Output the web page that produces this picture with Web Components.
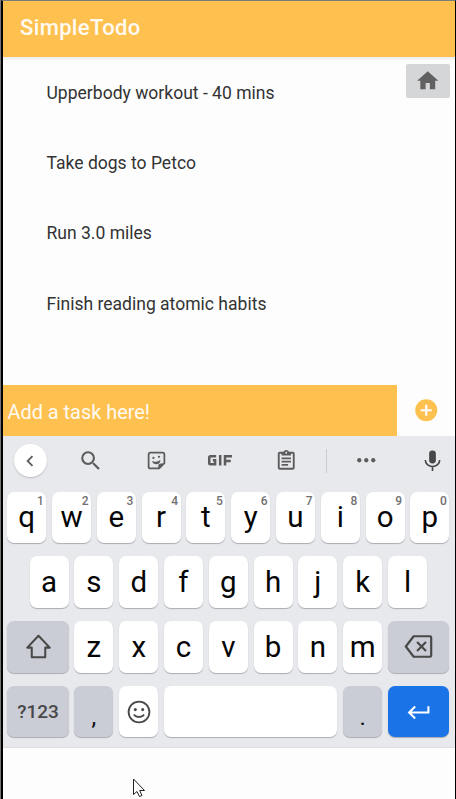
<!DOCTYPE html>
<html lang="en">
<head>
<meta charset="utf-8">
<title>SimpleTodo</title>
<style>
html,body{margin:0;height:100%;overflow:hidden;background:#fff}
body{font-family:Roboto,"Liberation Sans",sans-serif}
</style>
</head>
<body>
<todo-app></todo-app>
<script>
const ICONS = {
  home: '<path d="M10 20v-6h4v6h5v-8h3L12 3 2 12h3v8z"/>',
  plus: '<path d="M12 2a10 10 0 1 0 0 20 10 10 0 0 0 0-20zm5 11h-4v4h-2v-4H7v-2h4V7h2v4h4z"/>',
  back: '<path d="M15.41 7.41 14 6l-6 6 6 6 1.41-1.41L10.83 12z"/>',
  search: '<path d="M15.5 14h-.79l-.28-.27A6.47 6.47 0 0 0 16 9.5 6.5 6.5 0 1 0 9.5 16c1.61 0 3.09-.59 4.23-1.57l.27.28v.79l5 4.99L20.49 19zm-6 0a4.5 4.5 0 1 1 0-9 4.5 4.5 0 0 1 0 9z"/>',
  sticker: '<path fill="none" stroke="currentColor" stroke-width="2" stroke-linejoin="round" d="M5 3h14a2 2 0 0 1 2 2v10l-6 6H5a2 2 0 0 1-2-2V5a2 2 0 0 1 2-2z"/><path d="M14 21v-2.500a3 3 0 0 1 3-3h4v.500l-5.500 5.500zM6.800 12.500c3 1.500 7 1 9.500-1.500.4 3.200-1.800 5.300-4.500 5.300-2.300 0-4.300-1.300-5-3.800z"/><circle cx="8.500" cy="9" r="1.300"/><circle cx="14.800" cy="7.800" r="1.300"/>',
  clip: '<path d="M19 3h-4.180C14.400 1.840 13.300 1 12 1s-2.400.84-2.820 2H5c-1.100 0-2 .9-2 2v15c0 1.100.9 2 2 2h14c1.100 0 2-.9 2-2V5c0-1.100-.9-2-2-2zm-7 0a1 1 0 1 1 0 2 1 1 0 0 1 0-2zm7 17H5V5h2v2h10V5h2zM7 9h10v1.800H7zm0 3.500h10v1.800H7zM7 16h7v1.800H7z"/>',
  dots: '<circle cx="3.800" cy="12" r="2.500"/><circle cx="12" cy="12" r="2.500"/><circle cx="20.200" cy="12" r="2.500"/>',
  mic: '<rect x="8.500" y="1.500" width="7" height="13.500" rx="3.300"/><path fill="none" stroke="currentColor" stroke-width="1.700" d="M4.500 11.500a7.500 6.800 0 0 0 15 0M12 18v5"/>',
  shift: '<path fill="none" stroke="currentColor" stroke-width="1.800" stroke-linejoin="round" d="M12 2.500 2 13h4v8.500h12V13h4z"/>',
  bksp: '<path fill="none" stroke="currentColor" stroke-width="1.800" stroke-linejoin="round" d="M8 3.500h13.500a1 1 0 0 1 1 1v15a1 1 0 0 1-1 1H8L1.500 12zM10.800 8.300l7.400 7.400m0-7.400-7.400 7.400"/>',
  smile: '<circle cx="12" cy="12" r="9.600" fill="none" stroke="currentColor" stroke-width="1.700"/><circle cx="8.600" cy="9.800" r="1.400"/><circle cx="15.400" cy="9.800" r="1.400"/><path fill="none" stroke="currentColor" stroke-width="1.500" d="M7.300 14.300c1.800 3 7.600 3 9.400 0"/>',
  enter: '<path fill="none" stroke="currentColor" stroke-width="2" d="M21.500 7v6H3.500M8.800 7.300 3 13l5.800 5.700"/>',
  gif: '<path fill="none" stroke="currentColor" stroke-width="2.600" d="M9.500 2.300H3.600a1.300 1.300 0 0 0-1.300 1.300v5.800a1.300 1.300 0 0 0 1.300 1.300h4.800V6.500H6M13.700 1v11M18.700 12V2.300H26M18.700 7.200h6"/>'
};
function define(name, css, html, setup) {
  const t = document.createElement('template');
  t.innerHTML = `<style>${css}</style>${html}`;
  customElements.define(name, class extends HTMLElement {
    connectedCallback() {
      if (this.shadowRoot) return;
      this.attachShadow({mode: 'open'}).append(t.content.cloneNode(true));
      if (setup) setup(this, this.shadowRoot);
    }
  });
}
define('ui-icon', ':host{display:block;flex:none;line-height:0}svg{display:block;fill:currentColor}', '<svg></svg>', (el, root) => {
  const svg = root.querySelector('svg');
  const w = el.getAttribute('w'), n = el.getAttribute('name');
  svg.setAttribute('viewBox', n === 'gif' ? '0 0 27 13' : '0 0 24 24');
  svg.setAttribute('width', w);
  svg.setAttribute('height', el.getAttribute('h') || w);
  svg.innerHTML = ICONS[n];
});
define('app-header', `:host{display:flex;box-sizing:border-box;height:59px;padding:0 0 5px 17px;align-items:center;background:linear-gradient(#fec150 56px,#e9e9e9 56px,#f3f3f3 57px,#f3f3f3);color:#fffaf0;font:500 22px/26px Roboto,sans-serif;letter-spacing:.35px}`, '<slot></slot>');
define('task-item', `:host{display:flex;height:70.2px;align-items:center;padding-left:43.5px;font-size:17.550px;color:#333;white-space:nowrap}`, '<slot></slot>');
define('home-button', `:host{display:flex;width:44px;height:34.500px;align-items:center;justify-content:center;background:#d5d6d8;border-radius:2px;color:#616161}`, '<ui-icon name="home" w="25.500"></ui-icon>');
define('task-list', `:host{display:block;position:relative;height:324.500px;box-sizing:border-box;background:#fdfdfd}.items{margin-top:-2px}home-button{position:absolute;right:5px;top:3.500px}`, '<div style="display:flow-root"><div class="items"><slot></slot></div></div><home-button></home-button>');
define('task-input', `:host{display:flex;height:51.500px;background:#fdfdfd}
.field{width:394px;box-sizing:border-box;padding-left:4.500px;background:#fec150;color:#fffaf0;font-size:19.900px;display:flex;align-items:center;padding-top:4px}
.add{flex:1;display:flex;align-items:center;justify-content:center;color:#fec150}`, '<div class="field"><slot></slot></div><div class="add"><ui-icon name="plus" w="26.500"></ui-icon></div>');
define('key-cap', `:host{display:flex;position:relative;flex:none;box-sizing:border-box;width:39px;height:51.500px;border-radius:7px;background:#fff;box-shadow:0 1px 1px #aaacb2;align-items:center;justify-content:center;color:#050505;font-size:29.500px;line-height:34px}
:host([wide]){width:61.200px}:host([space]){width:173.400px}
:host([tone=gray]){background:#cacdd5;color:#484848}
:host([tone=blue]){background:#1b73e8;color:#fff}
:host([label]){font-size:19px;font-weight:500}
:host([punct]){color:#111;font-size:24px;padding-top:11px}
small{position:absolute;right:2.500px;top:3px;font:500 12px/12px Roboto,sans-serif;color:#707070}`, '<slot></slot><small></small>', (el, root) => {
  root.querySelector('small').textContent = el.getAttribute('hint') || '';
});
define('key-row', ':host{display:flex;gap:5.800px;justify-content:center;height:64.700px}', '<slot></slot>');
define('key-toolbar', `:host{display:grid;grid-template-columns:54.500px 67px 63px 65px 67px 13px 68px 63px;height:49px;align-items:center;justify-items:center;color:#5c5c5c}
.back{width:33px;height:33px;border-radius:50%;background:#fff;box-shadow:0 1px 1.500px #bbb;display:flex;align-items:center;justify-content:center}
.line{width:1px;height:24px;background:#cbccd0}.mic{color:#484848}`, `<div class="back"><ui-icon name="back" w="22"></ui-icon></div><ui-icon name="search" w="25.500"></ui-icon><ui-icon name="sticker" w="21"></ui-icon><ui-icon name="gif" w="26" h="12.500"></ui-icon><ui-icon name="clip" w="22.500"></ui-icon><div class="line"></div><ui-icon name="dots" w="20.500"></ui-icon><ui-icon class="mic" name="mic" w="23"></ui-icon>`);
const caps = (letters, hints = '') => [...letters].map((c, i) => `<key-cap${hints ? ` hint="${hints[i]}"` : ''}>${c}</key-cap>`).join('');
define('soft-keyboard', `:host{display:block;height:312px;box-sizing:border-box;background:#e8e9ed;border-bottom:1px solid #dddee0}
.keys{padding:6.700px 0 0 .8px;width:449px}`, `<key-toolbar></key-toolbar><div class="keys">
<key-row>${caps('qwertyuiop', '1234567890')}</key-row>
<key-row>${caps('asdfghjkl')}</key-row>
<key-row><key-cap wide tone="gray"><ui-icon name="shift" w="27"></ui-icon></key-cap>${caps('zxcvbnm')}<key-cap wide tone="gray"><ui-icon name="bksp" w="29"></ui-icon></key-cap></key-row>
<key-row><key-cap wide tone="gray" label>?123</key-cap><key-cap tone="gray" punct>,</key-cap><key-cap style="color:#484848"><ui-icon name="smile" w="26"></ui-icon></key-cap><key-cap space></key-cap><key-cap tone="gray" punct>.</key-cap><key-cap wide tone="blue"><ui-icon name="enter" w="25"></ui-icon></key-cap></key-row></div>`);
define('mouse-pointer', ':host{position:absolute;left:133px;top:778px;display:block}svg{display:block}', '<svg width="14" height="20" viewBox="0 0 14 20"><path d="M.5 1v15.500l3.500-3 2.500 5 2.500-1-2.300-5H11.500z" fill="#fff" stroke="#222" stroke-width="1"/></svg>');
define('todo-app', `:host{display:block;position:relative;box-sizing:border-box;width:456px;height:799px;border-left:3px solid #000;border-right:1px solid #000;border-top:1px solid #7b7b7b;background:#fdfdfd}
.edge{position:absolute;left:-3px;top:-1px;width:1px;height:799px;background:#777}mouse-pointer{margin:-1px 0 0 -3px}`, `<div class="edge"></div><app-header>SimpleTodo</app-header>
<task-list><task-item>Upperbody workout - 40 mins</task-item><task-item>Take dogs to Petco</task-item><task-item>Run 3.0 miles</task-item><task-item>Finish reading atomic habits</task-item></task-list>
<task-input>Add a task here!</task-input><soft-keyboard></soft-keyboard><mouse-pointer></mouse-pointer>`);
</script>
</body>
</html>
